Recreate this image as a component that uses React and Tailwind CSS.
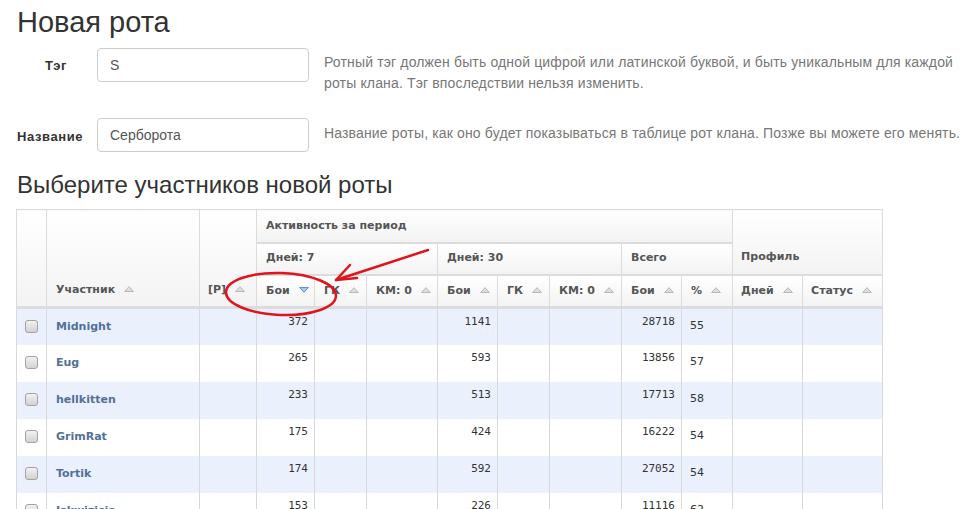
import React from "react";

const Up = () => (
  <svg width="10" height="6" viewBox="0 0 10 6" className="inline-block ml-[9px] align-[1px]">
    <path d="M5 0.7 L9.4 5.5 L0.6 5.5 Z" fill="#dedede" stroke="#b2b2b2" strokeWidth="0.9" />
  </svg>
);
const Down = () => (
  <svg width="10" height="6" viewBox="0 0 10 6" className="inline-block ml-[9px] align-[1px]">
    <path d="M0.6 0.5 L9.4 0.5 L5 5.3 Z" fill="#a7c6ee" stroke="#4f86cf" strokeWidth="0.9" />
  </svg>
);

const rows = [
  { name: "Midnight", b7: 372, b30: 1141, all: 28718, pct: 55 },
  { name: "Eug", b7: 265, b30: 593, all: 13856, pct: 57 },
  { name: "hellkitten", b7: 233, b30: 513, all: 17713, pct: 58 },
  { name: "GrimRat", b7: 175, b30: 424, all: 16222, pct: 54 },
  { name: "Tortik", b7: 174, b30: 592, all: 27052, pct: 54 },
  { name: "Iskwizicis", b7: 153, b30: 226, all: 11116, pct: 62 },
];

const th = "border border-[#dcdcdc] bg-gradient-to-b from-white to-[#f3f3f3] text-left font-bold text-[#555] whitespace-nowrap";

export default function App() {
  return (
    <div className="relative w-[976px] h-[509px] overflow-hidden bg-white font-['Liberation_Sans',sans-serif]">
      <div className="pl-[16px] pt-[6px]">
        <h1 className="text-[29px] leading-[32px] text-[#333] pl-[1px]">Новая рота</h1>

        <div className="mt-[10px] flex items-start h-[34px]">
          <div className="w-[81px] pt-[8px] pl-[29px] text-[13px] font-bold text-[#333] tracking-[0.4px]">Тэг</div>
          <div className="w-[212px] h-[34px] shrink-0 border border-[#cccccc] rounded-[4px] px-[12px] flex items-center text-[14px] text-[#555]">S</div>
          <div className="ml-[15px] pt-[4px] text-[14px] leading-[21px] text-[#777] tracking-[0.15px] w-[650px]">
            Ротный тэг должен быть одной цифрой или латинской буквой, и быть уникальным для каждой роты клана. Тэг впоследствии нельзя изменить.
          </div>
        </div>

        <div className="mt-[36px] flex items-start h-[34px]">
          <div className="w-[81px] pt-[9px] pl-[1px] text-[13px] font-bold text-[#333] tracking-[0.6px]">Название</div>
          <div className="w-[212px] h-[34px] shrink-0 border border-[#cccccc] rounded-[4px] px-[12px] flex items-center text-[14px] text-[#555]">Серборота</div>
          <div className="ml-[15px] pt-[5px] text-[14px] leading-[21px] text-[#777] tracking-[0.15px] whitespace-nowrap">
            Название роты, как оно будет показываться в таблице рот клана. Позже вы можете его менять.
          </div>
        </div>

        <h2 className="mt-[19px] text-[24px] leading-[27px] text-[#333] pl-[1px]">Выберите участников новой роты</h2>

        <table className="mt-[11px] table-fixed border-collapse border border-[#dcdcdc] w-[866px] font-['DejaVu_Sans',sans-serif] text-[11px]">
          <colgroup>
            <col className="w-[30px]" />
            <col className="w-[153px]" />
            <col className="w-[57px]" />
            <col className="w-[58px]" />
            <col className="w-[52px]" />
            <col className="w-[71px]" />
            <col className="w-[60px]" />
            <col className="w-[52px]" />
            <col className="w-[72px]" />
            <col className="w-[60px]" />
            <col className="w-[51px]" />
            <col className="w-[70px]" />
            <col className="w-[80px]" />
          </colgroup>
          <thead>
            <tr>
              <th rowSpan={3} className={th + " border-b-[3px]"}></th>
              <th rowSpan={3} className={th + " align-bottom pl-[9px] pb-[8px] border-b-[3px]"}>Участник<Up /></th>
              <th rowSpan={3} className={th + " align-bottom pl-[8px] pb-[8px] border-b-[3px]"}>[P]<Up /></th>
              <th colSpan={8} className={th + " h-[33px] pl-[9px] border-b-2"}>Активность за период</th>
              <th colSpan={2} rowSpan={2} className={th + " align-bottom pl-[8px] pb-[8px] border-b-2"}>Профиль</th>
            </tr>
            <tr>
              <th colSpan={3} className={th + " h-[32px] pl-[9px] border-b-2"}>Дней: 7</th>
              <th colSpan={3} className={th + " pl-[9px] border-b-2"}>Дней: 30</th>
              <th colSpan={2} className={th + " pl-[9px] border-b-2"}>Всего</th>
            </tr>
            <tr>
              <th className={th + " h-[33px] pl-[9px] border-b-[3px]"}>Бои<Down /></th>
              <th className={th + " pl-[9px] border-b-[3px]"}>ГК<Up /></th>
              <th className={th + " pl-[9px] border-b-[3px]"}>КМ: 0<Up /></th>
              <th className={th + " pl-[9px] border-b-[3px]"}>Бои<Up /></th>
              <th className={th + " pl-[9px] border-b-[3px]"}>ГК<Up /></th>
              <th className={th + " pl-[9px] border-b-[3px]"}>КМ: 0<Up /></th>
              <th className={th + " pl-[9px] border-b-[3px]"}>Бои<Up /></th>
              <th className={th + " pl-[9px] border-b-[3px]"}>%<Up /></th>
              <th className={th + " pl-[8px] border-b-[3px]"}>Дней<Up /></th>
              <th className={th + " pl-[8px] border-b-[3px]"}>Статус<Up /></th>
            </tr>
          </thead>
          <tbody>
            {rows.map((r, i) => {
              const bg = i % 2 === 0 ? "bg-[#eaf1fc]" : "bg-white";
              const td = "border-x border-[#d9d9d9] align-top";
              const num = td + " text-right pr-[6px] pt-[6px] leading-[14px] font-['DejaVu_Sans_Mono',monospace] text-[11px] text-[#333]";
              return (
                <tr key={r.name} className={bg + " h-[37px]"}>
                  <td className={td + " pt-[11px]"}>
                    <div className="ml-[8px] w-[13px] h-[13px] rounded-[3px] border border-[#a3a3a3] bg-gradient-to-b from-[#f2f2f2] to-[#d2d2d2]" />
                  </td>
                  <td className={td + " pl-[9px] pt-[10px] leading-[15px] font-bold text-[#52709a]"}>{r.name}</td>
                  <td className={td}></td>
                  <td className={num}>{r.b7}</td>
                  <td className={td}></td>
                  <td className={td}></td>
                  <td className={num}>{r.b30}</td>
                  <td className={td}></td>
                  <td className={td}></td>
                  <td className={num}>{r.all}</td>
                  <td className={td + " pl-[8px] pt-[10px] leading-[14px] text-[#333]"}>{r.pct}</td>
                  <td className={td}></td>
                  <td className={td}></td>
                </tr>
              );
            })}
          </tbody>
        </table>
      </div>

      <svg className="absolute left-0 top-0 pointer-events-none" width="976" height="509" viewBox="0 0 976 509">
        <ellipse cx="281" cy="294" rx="55" ry="21" fill="none" stroke="#e0141c" strokeWidth="2.5" transform="rotate(2 281 294)" />
        <path d="M428 250 L336 280" fill="none" stroke="#e0141c" strokeWidth="2.5" strokeLinecap="round" />
        <path d="M350 265 L336 280 L357 278" fill="none" stroke="#e0141c" strokeWidth="2.5" strokeLinecap="round" strokeLinejoin="round" />
      </svg>
    </div>
  );
}
